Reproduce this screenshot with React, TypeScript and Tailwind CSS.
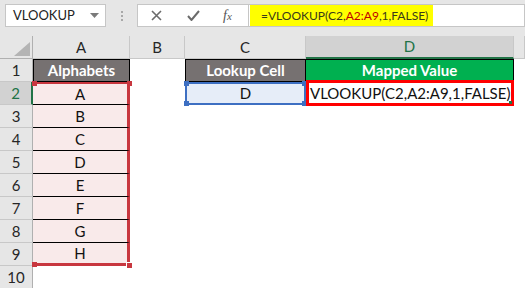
import React from 'react';

const rows = ['A', 'B', 'C', 'D', 'E', 'F', 'G', 'H'];
const font = { fontFamily: 'Lato, "Open Sans", sans-serif' };

function Handle({ className }: { className: string }) {
  return <span className={`absolute w-[5px] h-[5px] ${className}`} />;
}

function ColHead({ label, active }: { label: string; active?: boolean }) {
  return (
    <div
      className={`flex items-center justify-center border-r border-[#c8c8c8] text-[15px] ${
        active
          ? 'bg-[#d2d2d2] text-[#217346] border-b-2 border-b-[#217346]'
          : 'bg-[#e6e6e6] text-[#262626] border-b border-b-[#c8c8c8]'
      }`}
    >
      {label}
    </div>
  );
}

function RowHead({ n, active }: { n: number; active?: boolean }) {
  return (
    <div
      className={`flex items-center justify-center border-b border-[#c8c8c8] text-[15px] ${
        active
          ? 'bg-[#d2d2d2] text-[#217346] border-r-2 border-r-[#217346]'
          : 'bg-[#e6e6e6] text-[#262626] border-r border-r-[#b0b0b0]'
      }`}
    >
      {n}
    </div>
  );
}

export default function App() {
  return (
    <div className="w-[525px] h-[288px] overflow-hidden bg-white text-[#111]" style={font}>
      {/* Formula bar */}
      <div className="h-[36px] bg-[#e6e6e6] flex items-start pt-[4px] pl-[5px]">
        <div className="w-[101px] h-[23px] bg-white border border-[#c6c6c6] flex items-center justify-between pl-[7px] pr-[6px] text-[13px] text-[#222]">
          <span>VLOOKUP</span>
          <svg width="9" height="5" viewBox="0 0 9 5"><path d="M0 0h9L4.5 5z" fill="#7a7a7a" /></svg>
        </div>
        <div className="w-[31px] h-[23px] flex flex-col items-center justify-center gap-[2px]">
          <span className="w-[2px] h-[2px] bg-[#a8a8a8]" />
          <span className="w-[2px] h-[2px] bg-[#a8a8a8]" />
          <span className="w-[2px] h-[2px] bg-[#a8a8a8]" />
        </div>
        <div className="flex-1 h-[23px] bg-white border border-[#c6c6c6] flex items-stretch">
          <div className="w-[111px] flex items-center border-r border-[#c6c6c6]">
            <svg className="ml-[13px]" width="11" height="11" viewBox="0 0 11 11">
              <path d="M1 1l9 9M10 1l-9 9" stroke="#6b6b6b" strokeWidth="1.6" />
            </svg>
            <svg className="ml-[25px]" width="13" height="11" viewBox="0 0 13 11">
              <path d="M1 6l3.5 4L12 1" stroke="#6b6b6b" strokeWidth="2" fill="none" />
            </svg>
            <span className="ml-[23px] text-[14px] italic text-[#555]" style={{ fontFamily: '"Liberation Serif", serif' }}>
              f<span className="text-[11px]">x</span>
            </span>
          </div>
          <div className="w-[183px] ml-[1px] bg-[#ffff00] flex items-center pl-[11px] text-[12px] text-[#3a3a1a] whitespace-nowrap">
            =VLOOKUP(C2,<span className="text-[#c00000]">A2:A9</span>,1,FALSE)
          </div>
        </div>
      </div>

      {/* Sheet */}
      <div className="grid grid-cols-[33px_97px_55px_121px_208px_1fr] grid-rows-[23px_repeat(10,23px)]">
        <div className="bg-[#e6e6e6] border-r border-b border-[#b0b0b0] flex items-end justify-end p-[2px]">
          <svg width="16" height="14" viewBox="0 0 16 14"><path d="M16 0v14H0z" fill="#b4b4b4" /></svg>
        </div>
        <ColHead label="A" />
        <ColHead label="B" />
        <ColHead label="C" />
        <ColHead label="D" active />
        <ColHead label="" />

        {/* Row 1 */}
        <RowHead n={1} />
        <div className="bg-[#767171] border border-black flex items-center justify-center text-white font-bold text-[15px]">Alphabets</div>
        <div />
        <div className="bg-[#767171] border border-black flex items-center justify-center text-white font-bold text-[15px]">Lookup Cell</div>
        <div className="bg-[#00b050] border border-l-0 border-black flex items-center justify-center text-white font-bold text-[15px]">Mapped Value</div>
        <div />

        {rows.map((letter, i) => (
          <React.Fragment key={letter}>
            <RowHead n={i + 2} active={i === 0} />
            <div
              className={`relative bg-[#f9eaea] flex items-center justify-center text-[15px] border-r-[3px] border-r-[#c8373f] ${
                i === 7 ? 'border-b-[3px] border-b-[#c8373f]' : 'border-b border-b-black'
              } ${i === 0 ? 'border-t-2 border-t-[#c8373f]' : ''}`}
            >
              {letter}
              {i === 0 && <Handle className="-top-[3px] -left-[1px] w-[3px] bg-[#c8373f]" />}
              {i === 0 && <Handle className="-top-[3px] -right-[5px] bg-[#c8373f]" />}
              {i === 7 && <Handle className="-bottom-[4px] -left-[1px] w-[3px] bg-[#c8373f]" />}
              {i === 7 && <Handle className="-bottom-[5px] -right-[5px] bg-[#c8373f] outline outline-1 outline-white" />}
            </div>
            {i === 0 ? (
              <>
                <div />
                <div className="relative bg-[#e6edf8] border-2 border-[#3d6fc2] flex items-center justify-center text-[15px]">
                  D
                  <Handle className="-top-[3px] -left-[3px] bg-[#3d6fc2]" />
                  <Handle className="-top-[3px] -right-[3px] bg-[#3d6fc2]" />
                  <Handle className="-bottom-[3px] -left-[3px] bg-[#3d6fc2]" />
                  <Handle className="-bottom-[3px] -right-[3px] bg-[#3d6fc2]" />
                </div>
                <div className="relative -mt-[2px] h-[26px] border-[3px] border-[#ff0000] flex items-center pl-[1px] text-[15px] whitespace-nowrap bg-white">
                  VLOOKUP(C2,A2:A9,1,FALSE)
                  <span className="absolute right-[-1px] bottom-[-1px] w-[3px] h-[3px] bg-[#217346]" />
                </div>
                <div />
              </>
            ) : (
              <>
                <div />
                <div />
                <div />
                <div />
              </>
            )}
          </React.Fragment>
        ))}

        <RowHead n={10} />
        <div />
        <div />
        <div />
        <div />
        <div />
      </div>
    </div>
  );
}
